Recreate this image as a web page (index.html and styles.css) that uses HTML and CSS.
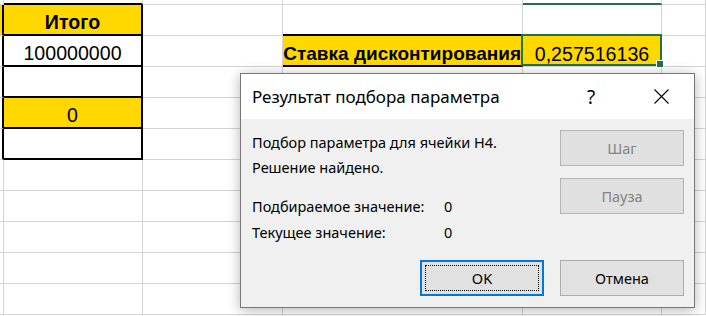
FILE: index.html
```html
<!DOCTYPE html>
<html lang="ru">
<head>
  <meta charset="UTF-8">
  <title>Подбор параметра</title>
  <link rel="stylesheet" href="styles.css">
</head>
<body>
  <div class="sheet">
    <!-- row 0 -->
    <div class="c"></div><div class="c bb"></div><div class="c"></div><div class="c"></div><div class="c gb"></div><div class="c"></div>
    <!-- row 1 -->
    <div class="c y br"></div><div class="c y box t b">Итого</div><div class="c"></div><div class="c bb"></div><div class="c"></div><div class="c"></div>
    <!-- row 2 -->
    <div class="c br"></div><div class="c box t">100000000</div><div class="c"></div><div class="c y bb t b right">Ставка дисконтирования</div>
    <div class="c y t cur">0,257516136<div class="sel"><div class="handle"></div></div></div><div class="c"></div>
    <!-- row 3 -->
    <div class="c br"></div><div class="c box"></div><div class="c"></div><div class="c"></div><div class="c"></div><div class="c"></div>
    <!-- row 4 -->
    <div class="c br"></div><div class="c y box t">0</div><div class="c"></div><div class="c"></div><div class="c"></div><div class="c"></div>
    <!-- row 5 -->
    <div class="c br"></div><div class="c box"></div><div class="c"></div><div class="c"></div><div class="c"></div><div class="c"></div>
    <!-- rows 6-10 -->
    <div class="c"></div><div class="c"></div><div class="c"></div><div class="c"></div><div class="c"></div><div class="c"></div>
    <div class="c"></div><div class="c"></div><div class="c"></div><div class="c"></div><div class="c"></div><div class="c"></div>
    <div class="c"></div><div class="c"></div><div class="c"></div><div class="c"></div><div class="c"></div><div class="c"></div>
    <div class="c"></div><div class="c"></div><div class="c"></div><div class="c"></div><div class="c"></div><div class="c"></div>
    <div class="c"></div><div class="c"></div><div class="c"></div><div class="c"></div><div class="c"></div><div class="c"></div>
  </div>

  <div class="dialog">
    <div class="dlg-title">
      <span class="dlg-caption">Результат подбора параметра</span>
      <span class="dlg-help">?</span>
      <span class="dlg-close">
        <svg width="15" height="15" viewBox="0 0 15 15">
          <path d="M0.5 0.5 L14.5 14.5 M14.5 0.5 L0.5 14.5" stroke="#000" stroke-width="1.1" fill="none"/>
        </svg>
      </span>
    </div>
    <div class="dlg-body">
      <div class="dlg-main">
        <div class="dlg-info">
          <p>Подбор параметра для ячейки H4.</p>
          <p>Решение найдено.</p>
          <div class="dlg-vals">
            <span>Подбираемое значение:</span><span>0</span>
            <span>Текущее значение:</span><span>0</span>
          </div>
        </div>
        <div class="dlg-side">
          <button class="btn" disabled>Шаг</button>
          <button class="btn" disabled>Пауза</button>
        </div>
      </div>
      <div class="dlg-foot">
        <button class="btn default"><span class="focus">OK</span></button>
        <button class="btn">Отмена</button>
      </div>
    </div>
  </div>
</body>
</html>
```

FILE: styles.css
```css
body {
  margin: 0;
  background: #fff;
  font-family: "Liberation Sans", Arial, sans-serif;
  overflow: hidden;
}
.sheet {
  display: grid;
  grid-template-columns: 4px 139px 140px 240px 139px 1fr;
  grid-template-rows: 5px;
  grid-auto-rows: 31px;
  width: 706px;
}
.c {
  box-sizing: border-box;
  border-right: 1px solid #d4d4d4;
  border-bottom: 1px solid #d4d4d4;
  background: #fff;
}
.y {
  background: #ffd800;
}
.bb {
  border-bottom: 2px solid #000;
}
.br {
  border-right: 2px solid #000;
}
.box {
  border-right: 2px solid #000;
  border-bottom: 2px solid #000;
}
.gb {
  border-bottom: 2px solid #217346;
}
.t {
  display: flex;
  align-items: flex-end;
  justify-content: center;
  font-size: 19.6px;
  line-height: 23px;
  color: #000;
  white-space: nowrap;
}
.b {
  font-weight: bold;
}
.right {
  justify-content: flex-end;
  padding-right: 1px;
  font-size: 19px;
}
.cur {
  position: relative;
}
.sel {
  position: absolute;
  left: -2px;
  top: -2px;
  width: 141px;
  height: 32px;
  box-sizing: border-box;
  border: 2px solid #217346;
}
.handle {
  position: absolute;
  right: -4px;
  bottom: -4px;
  width: 6px;
  height: 6px;
  background: #217346;
  border: 1px solid #fff;
}

/* dialog */
.dialog {
  position: absolute;
  left: 240px;
  top: 73px;
  width: 455px;
  height: 235px;
  box-sizing: border-box;
  border: 1px solid #777;
  background: #f0f0f0;
  box-shadow: 0 2px 12px rgba(0, 0, 0, 0.3);
  display: flex;
  flex-direction: column;
  font-family: "Noto Sans", sans-serif;
  color: #000;
}
.dlg-title {
  height: 45px;
  background: #fff;
  display: flex;
  align-items: center;
  padding: 0 15px 0 11px;
}
.dlg-caption {
  flex: 1;
  font-size: 17px;
}
.dlg-help {
  width: 36px;
  margin-right: 34px;
  text-align: center;
  font-size: 19px;
}
.dlg-close {
  width: 36px;
  display: flex;
  justify-content: center;
}
.dlg-body {
  flex: 1;
  display: flex;
  flex-direction: column;
  padding: 11px 10px 11px 11px;
}
.dlg-main {
  display: flex;
  flex: 1;
}
.dlg-info {
  flex: 1;
  font-size: 14.5px;
  line-height: 25px;
}
.dlg-info p {
  margin: 0;
}
.dlg-vals {
  margin-top: 14px;
  display: grid;
  grid-template-columns: 192px 1fr;
  row-gap: 1px;
}
.dlg-side {
  display: flex;
  flex-direction: column;
  gap: 12px;
}
.btn {
  width: 124px;
  height: 36px;
  box-sizing: border-box;
  background: #e1e1e1;
  border: 1px solid #adadad;
  font-family: "Noto Sans", sans-serif;
  font-size: 14.5px;
  color: #000;
  padding: 0;
}
.btn:disabled {
  background: #e0e0e0;
  border-color: #b4b4b4;
  color: #838383;
}
.dlg-foot {
  display: flex;
  justify-content: flex-end;
  gap: 16px;
}
.btn.default {
  border: 2px solid #0078d7;
  padding: 3px;
}
.focus {
  display: flex;
  align-items: center;
  justify-content: center;
  height: 100%;
  border: 1px dotted #000;
  box-sizing: border-box;
}
```
